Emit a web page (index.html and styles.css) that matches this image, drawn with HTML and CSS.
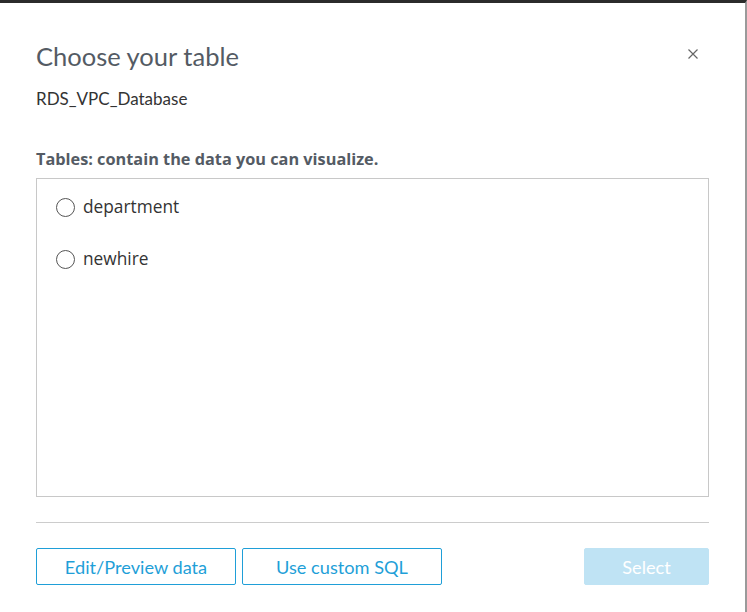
FILE: index.html
```html
<!DOCTYPE html>
<html>
<head>
<meta charset="utf-8">
<link rel="stylesheet" href="styles.css">
</head>
<body>
<div class="frame">
  <div class="dialog">
    <div class="header">
      <h1 class="title">Choose your table</h1>
      <button class="close" aria-label="Close">
        <svg width="10" height="10" viewBox="0 0 10 10"><path d="M0.5 0.5L9.5 9.5M9.5 0.5L0.5 9.5" stroke="#666" stroke-width="1.2" fill="none"/></svg>
      </button>
    </div>
    <div class="source">RDS_VPC_Database</div>
    <div class="label">Tables: contain the data you can visualize.</div>
    <div class="list">
      <label class="item"><span class="radio"></span><span class="name">department</span></label>
      <label class="item"><span class="radio"></span><span class="name">newhire</span></label>
    </div>
    <hr class="divider">
    <div class="footer">
      <button class="btn outline">Edit/Preview data</button>
      <button class="btn outline">Use custom SQL</button>
      <span class="spacer"></span>
      <button class="btn primary">Select</button>
    </div>
  </div>
</div>
</body>
</html>
```

FILE: styles.css
```css
html, body {
  margin: 0;
  padding: 0;
  background: #fff;
}
.frame {
  height: 609px;
  border-top: 3px solid #2b2b2b;
  border-right: 2px solid #9a9a9a;
  width: 745px;
  box-sizing: content-box;
}
.dialog {
  padding: 0 36px 0 36px;
  width: 673px;
  font-family: Lato, "Liberation Sans", sans-serif;
  color: #444;
}
.header {
  display: flex;
  align-items: center;
  justify-content: space-between;
  padding-top: 37px;
}
.title {
  margin: 0;
  font-weight: 400;
  font-size: 25.5px;
  line-height: 32px;
  color: #545b64;
}
.close {
  border: 0;
  background: none;
  padding: 0;
  margin-right: 11px;
  display: flex;
  margin-top: -4px;
}
.source {
  margin-top: 17px;
  font-size: 17px;
  line-height: 20px;
  color: #333;
}
.label {
  margin-top: 40px;
  font-family: "Open Sans", sans-serif;
  font-weight: 700;
  font-size: 16.3px;
  line-height: 20px;
  color: #545b64;
}
.list {
  margin-top: 9px;
  height: 319px;
  border: 1px solid #c8c8c8;
  padding: 18px 0 0 19px;
  box-sizing: border-box;
  display: flex;
  flex-direction: column;
  gap: 32px;
}
.item {
  display: flex;
  align-items: center;
  gap: 8px;
  font-family: "Open Sans", sans-serif;
  font-size: 17.3px;
  line-height: 20px;
  color: #333;
}
.radio {
  width: 19px;
  height: 19px;
  border: 1px solid #555;
  border-radius: 50%;
  box-sizing: border-box;
}
.divider {
  margin: 25px 0 0 0;
  border: 0;
  border-top: 1px solid #ccc;
}
.footer {
  display: flex;
  gap: 6px;
  margin-top: 25px;
}
.spacer { flex: 1; }
.btn {
  height: 37px;
  font-family: Lato, sans-serif;
  font-size: 18.2px;
  border-radius: 2px;
  padding: 0;
}
.outline {
  width: 200px;
  background: #fff;
  border: 1px solid #1f9fd8;
  color: #1f9fd8;
}
.primary {
  width: 125px;
  background: #bfe3f4;
  border: 1px solid #bfe3f4;
  color: #fff;
}
```
